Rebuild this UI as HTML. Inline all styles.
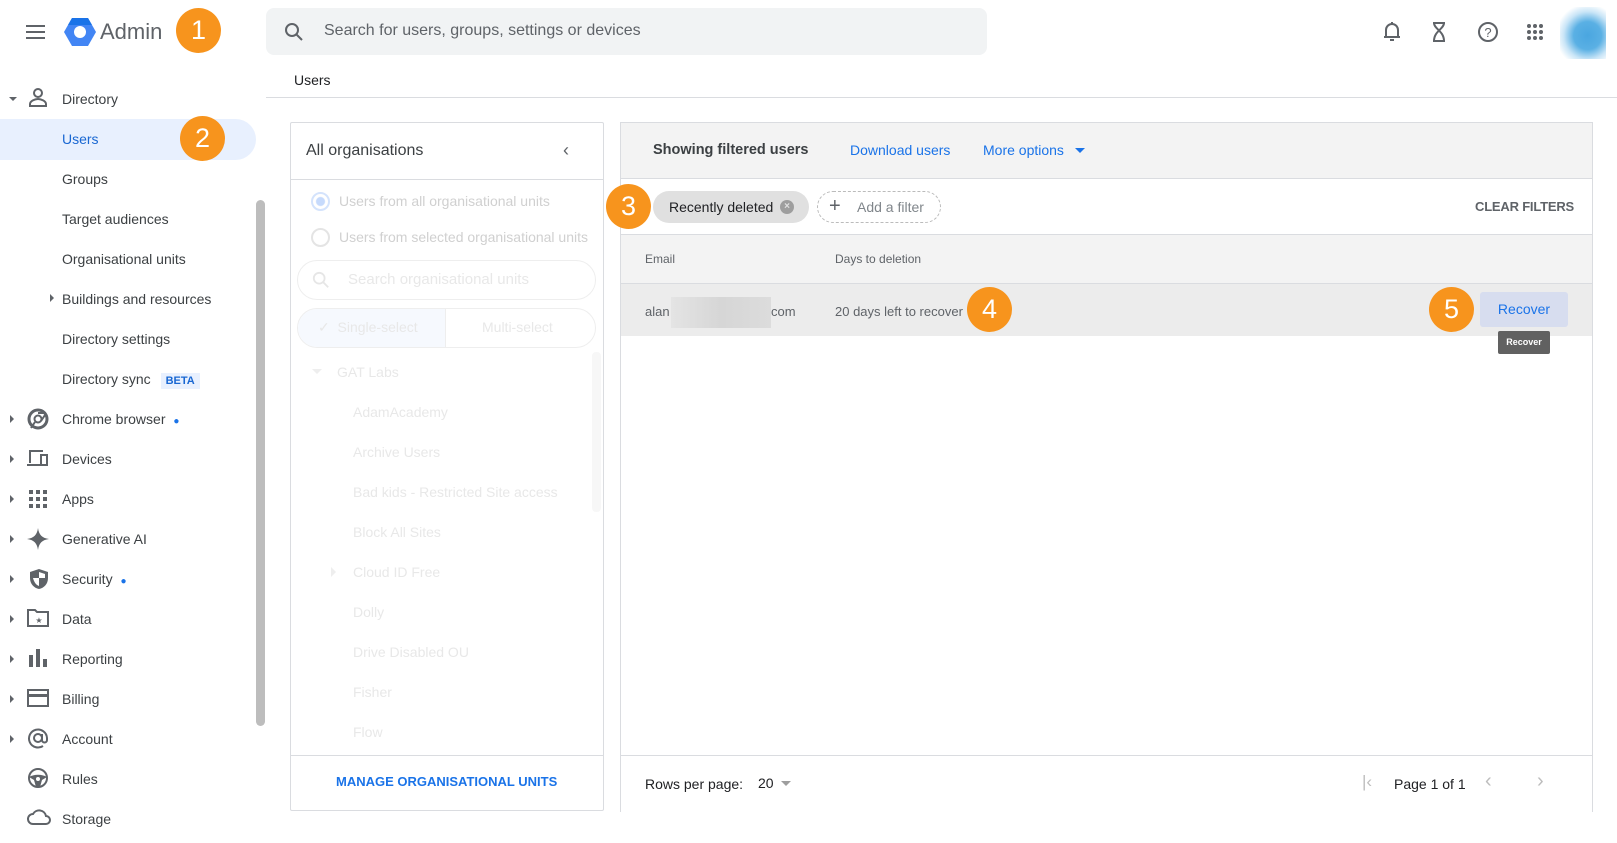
<!DOCTYPE html>
<html><head><meta charset="utf-8"><style>
*{box-sizing:border-box;margin:0;padding:0}
body{width:1617px;height:843px;overflow:hidden;background:#fff;font-family:"Liberation Sans",Arial,sans-serif;color:#3c4043;position:relative}
.a{position:absolute}
.badge{position:absolute;width:45px;height:45px;border-radius:50%;background:#f7941d;color:#fff;font-size:27px;text-align:center;line-height:45px}
.nav{position:absolute;left:62px;font-size:14px;color:#3c4043}
.arr{position:absolute;left:10px;width:0;height:0;border-top:4px solid transparent;border-bottom:4px solid transparent;border-left:4px solid #5f6368}
.ico{position:absolute;left:27px}
.org{position:absolute;font-size:14px;color:#e8e8e8}
.hl{position:absolute;background:#dadce0}
</style></head><body>
<div class="a" style="left:26px;top:25px;width:19px;height:2px;background:#5f6368;box-shadow:0 6px 0 #5f6368,0 12px 0 #5f6368"></div>
<svg class="a" style="left:64px;top:17px" width="32" height="30" viewBox="0 0 32 30"><polygon points="8,1 24,1 32,15 24,29 8,29 0,15" fill="#4285f4"/><polygon points="8,1 24,1 28,8 4,8" fill="#1a73e8"/><circle cx="16" cy="15" r="6" fill="#fff"/></svg>
<div class="a" style="left:100px;top:19px;font-size:22px;color:#5f6368">Admin</div>
<div class="badge" style="left:176px;top:8px">1</div>
<div class="a" style="left:266px;top:8px;width:721px;height:47px;background:#f1f3f4;border-radius:8px"></div>
<svg class="a" style="left:284px;top:22px" width="20" height="20" viewBox="0 0 20 20"><circle cx="8" cy="8" r="6" fill="none" stroke="#5f6368" stroke-width="2"/><line x1="12.5" y1="12.5" x2="18" y2="18" stroke="#5f6368" stroke-width="2"/></svg>
<div class="a" style="left:324px;top:22px;font-size:16px;color:#5f6368">Search for users, groups, settings or devices</div>
<svg class="a" style="left:1382px;top:21px" width="20" height="22" viewBox="0 0 20 22"><path d="M4 16V9a6 6 0 0 1 12 0v7M2 16h16M8 19h4M10 3V1" fill="none" stroke="#5f6368" stroke-width="2"/></svg>
<svg class="a" style="left:1431px;top:21px" width="16" height="22" viewBox="0 0 16 22"><path d="M2 2h12M2 20h12M3 2c0 6 10 8 10 18M13 2c0 6-10 8-10 18" fill="none" stroke="#5f6368" stroke-width="2"/></svg>
<svg class="a" style="left:1477px;top:21px" width="22" height="22" viewBox="0 0 22 22"><circle cx="11" cy="11" r="9" fill="none" stroke="#5f6368" stroke-width="2"/><text x="11" y="16" font-size="13" text-anchor="middle" fill="#5f6368" font-family="Liberation Sans">?</text></svg>
<svg class="a" style="left:1526px;top:23px" width="18" height="18" viewBox="0 0 18 18" fill="#5f6368"><circle cx="3" cy="3" r="2"/><circle cx="9" cy="3" r="2"/><circle cx="15" cy="3" r="2"/><circle cx="3" cy="9" r="2"/><circle cx="9" cy="9" r="2"/><circle cx="15" cy="9" r="2"/><circle cx="3" cy="15" r="2"/><circle cx="9" cy="15" r="2"/><circle cx="15" cy="15" r="2"/></svg>
<div class="a" style="left:1560px;top:7px;width:46px;height:52px;background:radial-gradient(circle at 60% 55%,#4aa6e0 0,#5ab0e4 35%,rgba(120,190,235,0.4) 60%,#fff 80%)"></div>
<div class="a" style="left:294px;top:72px;font-size:14px;color:#202124">Users</div>
<div class="a" style="left:266px;top:97px;width:1351px;height:1px;background:#dadce0"></div>

<div class="a" style="left:9px;top:97px;border-left:4px solid transparent;border-right:4px solid transparent;border-top:4px solid #5f6368"></div>
<svg class="ico" style="top:88px" width="22" height="20" viewBox="0 0 22 20"><circle cx="11" cy="5" r="4" fill="none" stroke="#5f6368" stroke-width="2"/><path d="M3 18v-2c0-3 5-5 8-5s8 2 8 5v2z" fill="none" stroke="#5f6368" stroke-width="2"/></svg>
<div class="nav" style="top:91px">Directory</div>
<div class="a" style="left:0;top:119px;width:256px;height:41px;background:#e8f0fe;border-radius:0 21px 21px 0"></div>
<div class="nav" style="top:131px;color:#1967d2">Users</div>
<div class="badge" style="left:180px;top:116px">2</div>
<div class="nav" style="top:171px">Groups</div>
<div class="nav" style="top:211px">Target audiences</div>
<div class="nav" style="top:251px">Organisational units</div>
<div class="arr" style="left:50px;top:294px"></div>
<div class="nav" style="top:291px">Buildings and resources</div>
<div class="nav" style="top:331px">Directory settings</div>
<div class="nav" style="top:371px">Directory sync <span style="display:inline-block;margin-left:6px;background:#e8f0fe;color:#1967d2;font-size:11px;font-weight:bold;padding:2px 5px">BETA</span></div>
<div class="a" style="left:256px;top:200px;width:9px;height:526px;background:#bdbdbd;border-radius:5px"></div>

<div class="arr" style="top:415px"></div><svg class="ico" style="top:408px" width="22" height="22" viewBox="0 0 22 22"><circle cx="11" cy="11" r="9" fill="none" stroke="#5f6368" stroke-width="3"/><circle cx="11" cy="11" r="3.5" fill="none" stroke="#5f6368" stroke-width="2"/><path d="M11 5h8M8 14l-4 6M14 13l4-6" stroke="#5f6368" stroke-width="2"/></svg>
<div class="nav" style="top:411px">Chrome browser <span style="color:#1a73e8;font-size:10px;margin-left:4px">●</span></div>
<div class="arr" style="top:455px"></div><svg class="ico" style="top:449px" width="22" height="20" viewBox="0 0 22 20"><path d="M2 2h14M3 2v12M0 16h13M14 6h6v10h-6z" fill="none" stroke="#5f6368" stroke-width="2"/></svg>
<div class="nav" style="top:451px">Devices</div>
<div class="arr" style="top:495px"></div><svg class="ico" style="top:490px;left:29px" width="18" height="18" viewBox="0 0 18 18" fill="#5f6368"><rect x="0" y="0" width="4" height="4"/><rect x="7" y="0" width="4" height="4"/><rect x="14" y="0" width="4" height="4"/><rect x="0" y="7" width="4" height="4"/><rect x="7" y="7" width="4" height="4"/><rect x="14" y="7" width="4" height="4"/><rect x="0" y="14" width="4" height="4"/><rect x="7" y="14" width="4" height="4"/><rect x="14" y="14" width="4" height="4"/></svg>
<div class="nav" style="top:491px">Apps</div>
<div class="arr" style="top:535px"></div><svg class="ico" style="top:528px" width="22" height="22" viewBox="0 0 22 22"><path d="M11 0C12 7 15 10 22 11 15 12 12 15 11 22 10 15 7 12 0 11 7 10 10 7 11 0z" fill="#5f6368"/></svg>
<div class="nav" style="top:531px">Generative AI</div>
<div class="arr" style="top:575px"></div><svg class="ico" style="top:568px;left:29px" width="20" height="22" viewBox="0 0 20 22"><path d="M10 1l9 3v6c0 6-4 10-9 11C5 20 1 16 1 10V4z" fill="#5f6368"/><path d="M10 4l6 2v4h-6zM10 10v8c-3-1-5-4-6-8z" fill="#fff"/></svg>
<div class="nav" style="top:571px">Security <span style="color:#1a73e8;font-size:10px;margin-left:4px">●</span></div>
<div class="arr" style="top:615px"></div><svg class="ico" style="top:609px" width="22" height="18" viewBox="0 0 22 18"><path d="M1 1h7l2 2h11v14H1z" fill="none" stroke="#5f6368" stroke-width="2"/><text x="12" y="14" font-size="8" text-anchor="middle" fill="#5f6368">★</text></svg>
<div class="nav" style="top:611px">Data</div>
<div class="arr" style="top:655px"></div><svg class="ico" style="top:649px;left:29px" width="18" height="18" viewBox="0 0 18 18" fill="#5f6368"><rect x="0" y="6" width="4" height="12"/><rect x="7" y="0" width="4" height="18"/><rect x="14" y="10" width="4" height="8"/></svg>
<div class="nav" style="top:651px">Reporting</div>
<div class="arr" style="top:695px"></div><svg class="ico" style="top:689px" width="22" height="18" viewBox="0 0 22 18"><rect x="1" y="1" width="20" height="16" fill="none" stroke="#5f6368" stroke-width="2"/><rect x="1" y="5" width="20" height="3" fill="#5f6368"/></svg>
<div class="nav" style="top:691px">Billing</div>
<div class="arr" style="top:735px"></div><svg class="ico" style="top:727px" width="22" height="22" viewBox="0 0 22 22"><path d="M16 19A9 9 0 1 1 20 11v2a2.5 2.5 0 0 1-5 0V7" fill="none" stroke="#5f6368" stroke-width="2"/><circle cx="11" cy="11" r="4" fill="none" stroke="#5f6368" stroke-width="2"/></svg>
<div class="nav" style="top:731px">Account</div>
<svg class="ico" style="top:767px" width="22" height="22" viewBox="0 0 22 22"><circle cx="11" cy="11" r="9" fill="none" stroke="#5f6368" stroke-width="2"/><path d="M2 10c5-3 13-3 18 0l-5 3-2 7h-4l-2-7z" fill="#5f6368"/><circle cx="11" cy="12" r="2" fill="#fff"/></svg>
<div class="nav" style="top:771px">Rules</div>
<svg class="ico" style="top:808px" width="24" height="18" viewBox="0 0 24 18"><path d="M6 16a5 5 0 0 1 0-10 7 7 0 0 1 13 2 4 4 0 0 1 0 8z" fill="none" stroke="#5f6368" stroke-width="2"/></svg>
<div class="nav" style="top:811px">Storage</div>

<div class="a" style="left:290px;top:122px;width:314px;height:689px;border:1px solid #dadce0;border-radius:2px"></div>
<div class="a" style="left:306px;top:142px;font-size:16px;color:#3c4043">All organisations</div>
<div class="a" style="left:563px;top:140px;font-size:18px;color:#5f6368">‹</div>
<div class="a" style="left:291px;top:179px;width:312px;height:1px;background:#dadce0"></div>
<div class="a" style="left:311px;top:192px;width:19px;height:19px;border-radius:50%;border:2px solid #d4e3fc;background:radial-gradient(circle,#c6dafc 0 4px,#fff 5px)"></div>
<div class="org" style="left:339px;top:193px;color:#d0d0d0">Users from all organisational units</div>
<div class="a" style="left:311px;top:228px;width:19px;height:19px;border-radius:50%;border:2px solid #e4e4e4"></div>
<div class="org" style="left:339px;top:229px;color:#d0d0d0">Users from selected organisational units</div>
<div class="a" style="left:297px;top:260px;width:299px;height:40px;border:1px solid #eee;border-radius:20px"></div>
<svg class="a" style="left:312px;top:271px" width="18" height="18" viewBox="0 0 20 20"><circle cx="8" cy="8" r="6" fill="none" stroke="#e6e6e6" stroke-width="2"/><line x1="12.5" y1="12.5" x2="18" y2="18" stroke="#e6e6e6" stroke-width="2"/></svg>
<div class="org" style="left:348px;top:271px;font-size:15px">Search organisational units</div>
<div class="a" style="left:297px;top:308px;width:299px;height:40px;border:1px solid #eee;border-radius:20px;overflow:hidden"><div style="width:148px;height:100%;background:#f6f9fe;border-right:1px solid #eee"></div></div>
<div class="org" style="left:318px;top:319px">✓ &nbsp;Single-select</div>
<div class="org" style="left:482px;top:319px">Multi-select</div>
<div class="a" style="left:592px;top:352px;width:9px;height:160px;background:#f7f7f7;border-radius:4px"></div>
<div class="a" style="left:312px;top:369px;border-left:5px solid transparent;border-right:5px solid transparent;border-top:5px solid #eee"></div>
<div class="org" style="left:337px;top:364px">GAT Labs</div>
<div class="org" style="left:353px;top:404px">AdamAcademy</div>
<div class="org" style="left:353px;top:444px">Archive Users</div>
<div class="org" style="left:353px;top:484px">Bad kids - Restricted Site access</div>
<div class="org" style="left:353px;top:524px">Block All Sites</div>
<div class="a" style="left:331px;top:567px;border-top:5px solid transparent;border-bottom:5px solid transparent;border-left:5px solid #eee"></div>
<div class="org" style="left:353px;top:564px">Cloud ID Free</div>
<div class="org" style="left:353px;top:604px">Dolly</div>
<div class="org" style="left:353px;top:644px">Drive Disabled OU</div>
<div class="org" style="left:353px;top:684px">Fisher</div>
<div class="org" style="left:353px;top:724px">Flow</div>
<div class="a" style="left:291px;top:755px;width:312px;height:1px;background:#dadce0"></div>
<div class="a" style="left:336px;top:774px;font-size:13px;font-weight:bold;color:#1a73e8">MANAGE ORGANISATIONAL UNITS</div>

<div class="a" style="left:620px;top:122px;width:973px;height:690px;border:1px solid #dadce0;border-bottom:none"></div>
<div class="a" style="left:621px;top:123px;width:971px;height:55px;background:#f3f3f3"></div>
<div class="a" style="left:653px;top:142px;font-size:14.5px;font-weight:bold;color:#3c4043">Showing filtered users</div>
<div class="a" style="left:850px;top:142px;font-size:14px;color:#1a73e8">Download users</div>
<div class="a" style="left:983px;top:142px;font-size:14px;color:#1a73e8">More options</div>
<div class="a" style="left:1075px;top:148px;border-left:5px solid transparent;border-right:5px solid transparent;border-top:5px solid #1a73e8"></div>
<div class="hl" style="left:621px;top:178px;width:971px;height:1px"></div>
<div class="a" style="left:653px;top:191px;width:156px;height:32px;background:#e0e0e0;border-radius:16px"></div>
<div class="a" style="left:669px;top:199px;font-size:14px;color:#202124">Recently deleted</div>
<div class="a" style="left:780px;top:200px;width:14px;height:14px;border-radius:50%;background:#9e9e9e;color:#e0e0e0;font-size:10px;text-align:center;line-height:14px;font-weight:bold">×</div>
<div class="a" style="left:817px;top:191px;width:124px;height:32px;border:1px dashed #bbb;border-radius:16px"></div>
<div class="a" style="left:829px;top:195px;font-size:20px;color:#5f6368">+</div>
<div class="a" style="left:857px;top:199px;font-size:14px;color:#80868b">Add a filter</div>
<div class="badge" style="left:606px;top:184px">3</div>
<div class="a" style="left:1475px;top:199px;font-size:13px;font-weight:bold;color:#5f6368;letter-spacing:-0.2px">CLEAR FILTERS</div>
<div class="hl" style="left:621px;top:234px;width:971px;height:1px"></div>
<div class="a" style="left:621px;top:235px;width:971px;height:48px;background:#f3f3f3"></div>
<div class="a" style="left:645px;top:252px;font-size:12px;color:#5f6368">Email</div>
<div class="a" style="left:835px;top:252px;font-size:12px;color:#5f6368">Days to deletion</div>
<div class="hl" style="left:621px;top:283px;width:971px;height:1px"></div>
<div class="a" style="left:621px;top:284px;width:971px;height:52px;background:#ececec"></div>
<div class="a" style="left:645px;top:304px;font-size:13px;color:#5f6368">alan</div>
<div class="a" style="left:671px;top:297px;width:100px;height:31px;background:linear-gradient(90deg,#e4e4e4,#d6d6d6,#dcdcdc)"></div>
<div class="a" style="left:771px;top:304px;font-size:13px;color:#5f6368">com</div>
<div class="a" style="left:835px;top:304px;font-size:13px;color:#5f6368">20 days left to recover</div>
<div class="badge" style="left:967px;top:287px">4</div>
<div class="badge" style="left:1429px;top:287px">5</div>
<div class="a" style="left:1480px;top:292px;width:88px;height:35px;background:#d7ddef;border-radius:3px;color:#1a73e8;font-size:14px;text-align:center;line-height:35px">Recover</div>
<div class="a" style="left:1498px;top:331px;width:52px;height:23px;background:#616161;border-radius:2px;color:#fff;font-size:9px;font-weight:bold;text-align:center;line-height:23px">Recover</div>
<div class="hl" style="left:621px;top:755px;width:971px;height:1px"></div>
<div class="a" style="left:645px;top:776px;font-size:14px;color:#202124">Rows per page:</div>
<div class="a" style="left:758px;top:775px;font-size:14px;color:#202124">20</div>
<div class="a" style="left:781px;top:781px;border-left:5px solid transparent;border-right:5px solid transparent;border-top:5px solid #9e9e9e"></div>
<div class="a" style="left:1362px;top:772px;font-size:17px;color:#bdbdbd">|‹</div>
<div class="a" style="left:1394px;top:776px;font-size:14px;color:#202124">Page 1 of 1</div>
<div class="a" style="left:1485px;top:770px;font-size:20px;color:#bdbdbd">‹</div>
<div class="a" style="left:1537px;top:770px;font-size:20px;color:#bdbdbd">›</div>
</body></html>
